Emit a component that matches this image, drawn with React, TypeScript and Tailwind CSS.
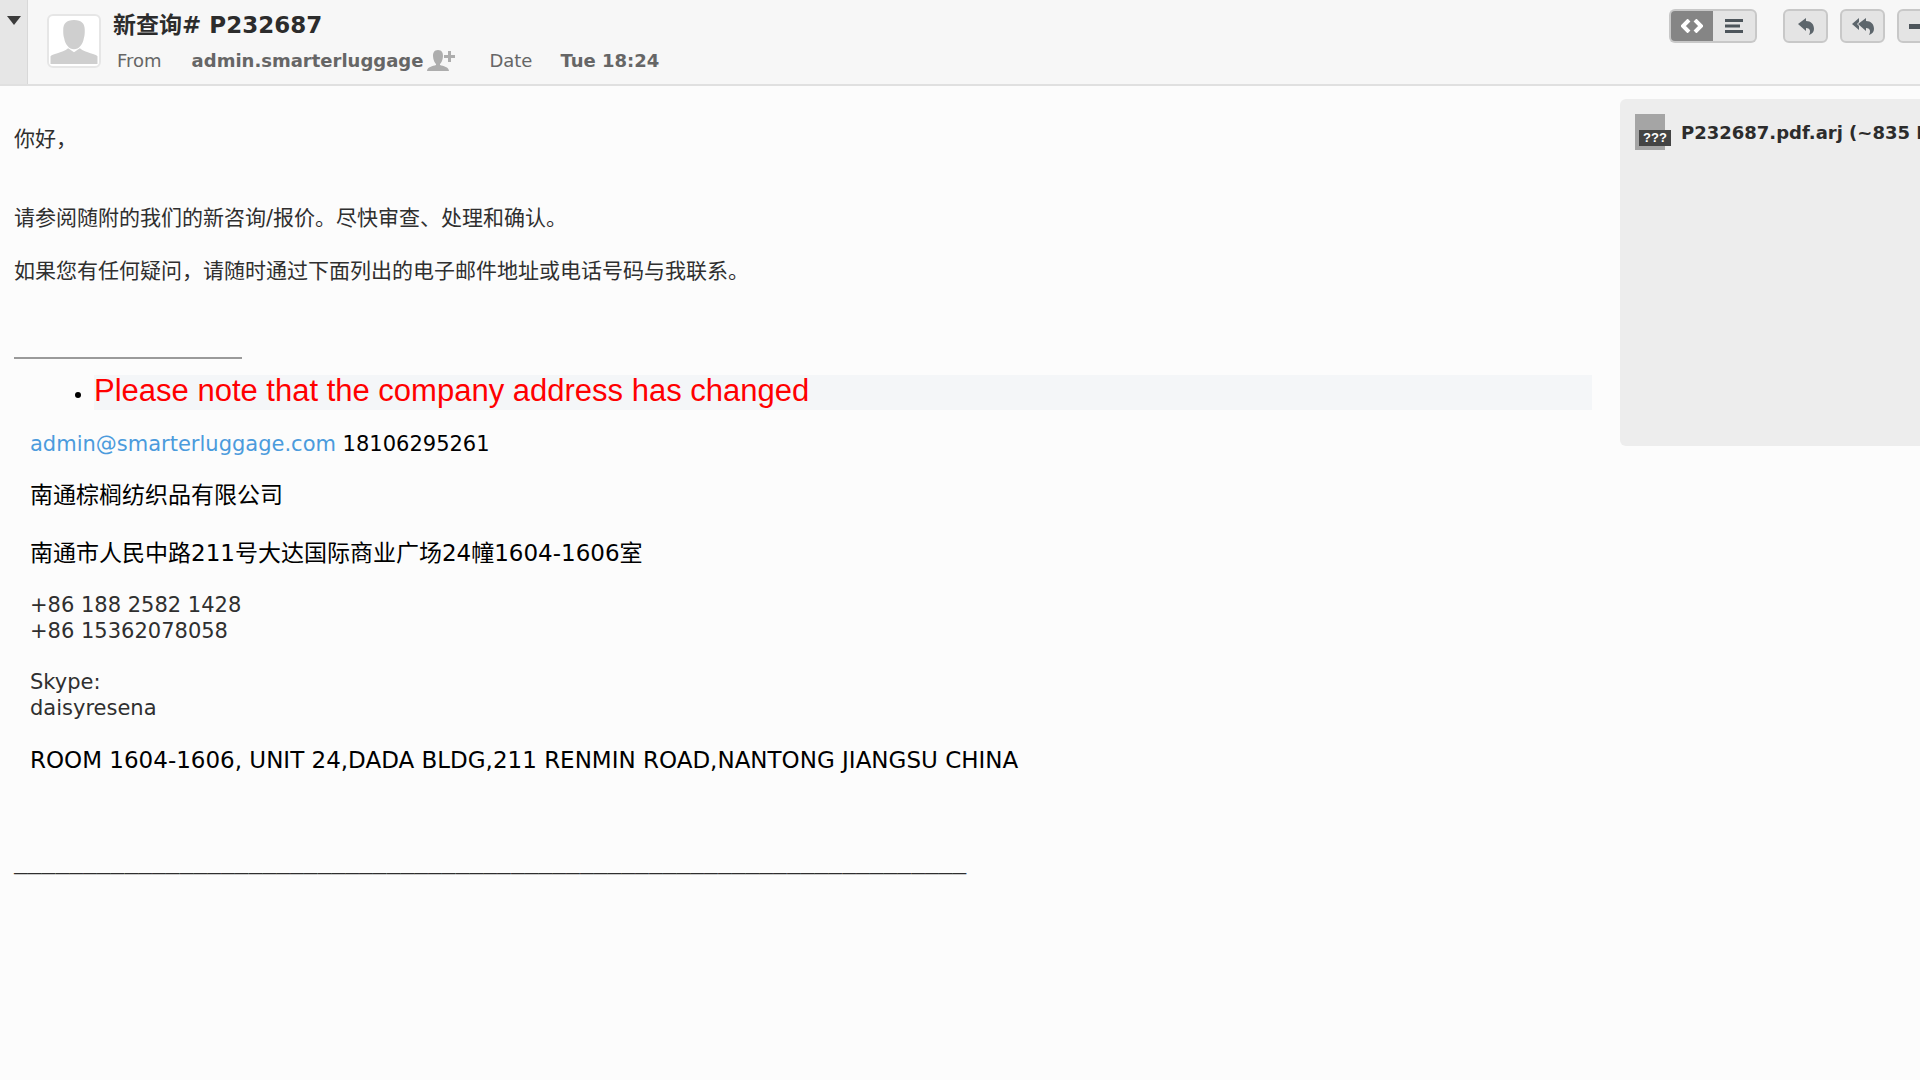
import type { ReactNode } from "react";

const bodyFont = "font-['DejaVu_Sans','Noto_Sans_CJK_SC',sans-serif]";

function ToolButton({ label, className, children }: { label: string; className: string; children: ReactNode }) {
  return (
    <button
      type="button"
      aria-label={label}
      className={`flex h-[34px] shrink-0 items-center justify-center border-2 border-[#c8c8c8] ${className}`}
    >
      {children}
    </button>
  );
}

function Avatar() {
  return (
    <div className="mt-3.5 ml-[19px] flex h-[54px] w-[54px] shrink-0 items-end justify-center rounded-md border-2 border-[#e6e6e6] bg-white pb-0.5">
      <svg width="48" height="45" viewBox="0 0 48 46" fill="#cfcfcf">
        <path d="M24 1c8 0 11 4 11 10 0 3 0 6-1 9-1 6-5 11-10 11s-9-5-10-11c-1-3-1-6-1-9C13 5 16 1 24 1z" />
        <path d="M0 46v-8c1-2 12-3 18-8l6 4 6-4c6 5 17 6 18 8v8z" />
      </svg>
    </div>
  );
}

function Header() {
  return (
    <header className="flex h-[86px] border-b-2 border-[#e0e0e0] bg-[#f7f7f7]">
      <button type="button" aria-label="Toggle details" className="flex w-7 shrink-0 justify-center border-r border-[#d8d8d8] bg-[#e6e6e6] pt-4">
        <svg width="14" height="9" viewBox="0 0 14 9" fill="#3c3c3c">
          <path d="M0 0h14L7 9z" />
        </svg>
      </button>
      <Avatar />
      <div className="ml-3 flex flex-col pt-2.5">
        <h1 className="text-[23px] leading-[30px] font-bold whitespace-nowrap text-[#2c2c2c]">新查询# P232687</h1>
        <div className="mt-[9px] ml-1 flex items-center text-[18px] leading-6 whitespace-nowrap text-[#666]">
          <span>From</span>
          <a href="#" className="ml-[30px] font-bold">admin.smarterluggage</a>
          {/* add contact */}
          <button type="button" aria-label="Add contact" className="ml-1">
            <svg width="28" height="22" viewBox="0 0 28 22" fill="#adadad">
              <path d="M11 0c4 0 5 3 5 6 0 4-2 7-3 8v1c3 1 9 2 9 6H0c0-4 6-5 9-6v-1c-1-1-3-4-3-8 0-3 1-6 5-6z" />
              <path d="M21 1h3v4h4v3h-4v4h-3V8h-4V5h4z" />
            </svg>
          </button>
          <span className="ml-[34px]">Date</span>
          <span className="ml-7 font-bold">Tue 18:24</span>
        </div>
      </div>
      <div className="ml-auto flex pt-[9px]">
        <ToolButton label="HTML view" className="w-11 rounded-l-md border-r-0 bg-[#858585] text-white">
          <svg width="22" height="14" viewBox="0 0 22 14" fill="none" stroke="currentColor" strokeWidth="4">
            <path d="M8 1L2 7l6 6M14 1l6 6-6 6" />
          </svg>
        </ToolButton>
        <ToolButton label="Text view" className="w-11 rounded-r-md border-l-0 bg-[#e4e4e4] text-[#4d555b]">
          <svg width="18" height="14" viewBox="0 0 18 14" fill="currentColor">
            <path d="M0 0h18v3H0zM0 5.5h15v3H0zM0 11h18v3H0z" />
          </svg>
        </ToolButton>
        <ToolButton label="Reply" className="ml-[26px] w-[45px] rounded-md bg-[#e4e4e4] text-[#5d666c]">
          <svg width="16" height="17" viewBox="0 0 16 17" fill="currentColor">
            <path d="M0 6l8-6v3c5 0 8 3 8 8 0 3-2 5-5 6 2-4 1-7-3-7v3z" />
          </svg>
        </ToolButton>
        <ToolButton label="Reply all" className="ml-3 w-[45px] rounded-md bg-[#e4e4e4] text-[#5d666c]">
          <svg width="22" height="17" viewBox="0 0 22 17" fill="currentColor">
            <path d="M6 6l8-6v3c5 0 8 3 8 8 0 3-2 5-5 6 2-4 1-7-3-7v3z" />
            <path d="M0 6l7-6v4L5 6l2 2v4z" />
          </svg>
        </ToolButton>
        <ToolButton label="More" className="ml-3 -mr-[22px] w-[45px] rounded-md bg-[#e4e4e4] text-[#4d555b]">
          <svg width="22" height="5" viewBox="0 0 22 5" fill="currentColor">
            <path d="M0 0h22v5H0z" />
          </svg>
        </ToolButton>
      </div>
    </header>
  );
}

function Message() {
  return (
    <article className="min-w-0 flex-1 pt-10 text-[21px] leading-[26px] text-[#2f2f2f]">
      <p>你好，</p>
      <p className="mt-[53px]">请参阅随附的我们的新咨询/报价。尽快审查、处理和确认。</p>
      <p className="mt-[27px]">如果您有任何疑问，请随时通过下面列出的电子邮件地址或电话号码与我联系。</p>
      <hr className="mt-[73px] w-[228px] border-t-2 border-[#9a9a9a]" />
      <ul className="mt-4 list-disc pl-20 text-black">
        <li className="bg-[#f4f6f8] leading-8">
          <span className="font-['Liberation_Sans',sans-serif] text-[31px] leading-none text-[#f00]">
            Please note that the company address has changed
          </span>
        </li>
      </ul>
      <div className="pl-4">
        <p className="mt-[21px] text-black">
          <a href="mailto:admin@smarterluggage.com" className="text-[#4b9bdc]">admin@smarterluggage.com</a> 18106295261
        </p>
        <p className="mt-[25px] text-[23px] text-black">南通棕榈纺织品有限公司</p>
        <p className="mt-8 text-[23px] text-black">南通市人民中路211号大达国际商业广场24幢1604-1606室</p>
        <p className="mt-[26px]">
          +86 188 2582 1428
          <br />
          +86 15362078058
        </p>
        <p className="mt-[25px]">
          Skype:
          <br />
          daisyresena
        </p>
        <p className="mt-[26px] text-[23px] text-black">
          ROOM 1604-1606, UNIT 24,DADA BLDG,211 RENMIN ROAD,NANTONG JIANGSU CHINA
        </p>
      </div>
      <p className="mt-20 font-['Liberation_Mono',monospace] text-[23px] font-bold whitespace-nowrap">
        _____________________________________________________________________
      </p>
    </article>
  );
}

function Attachments() {
  return (
    <aside className="mt-[13px] ml-7 h-[347px] w-[300px] shrink-0 overflow-hidden rounded-l-md bg-[#ededed] pt-[15px] pl-[15px]">
      <a href="#" className="flex items-center text-[18px] whitespace-nowrap text-[#2c2c2c]">
        <span className="flex h-9 w-[30px] shrink-0 items-center bg-[#a5a5a5] pt-3">
          <span className="ml-1 flex h-4 w-8 shrink-0 items-center justify-center bg-[#444] font-['Liberation_Sans',sans-serif] text-[13px] font-bold text-white">
            ???
          </span>
        </span>
        <span className="ml-4 font-bold">P232687.pdf.arj (~835 KB)</span>
      </a>
    </aside>
  );
}

export default function App() {
  return (
    <div lang="zh-CN" className={`min-h-screen overflow-hidden bg-[#fcfcfc] ${bodyFont}`}>
      <Header />
      <main className="flex items-start pl-3.5">
        <Message />
        <Attachments />
      </main>
    </div>
  );
}
